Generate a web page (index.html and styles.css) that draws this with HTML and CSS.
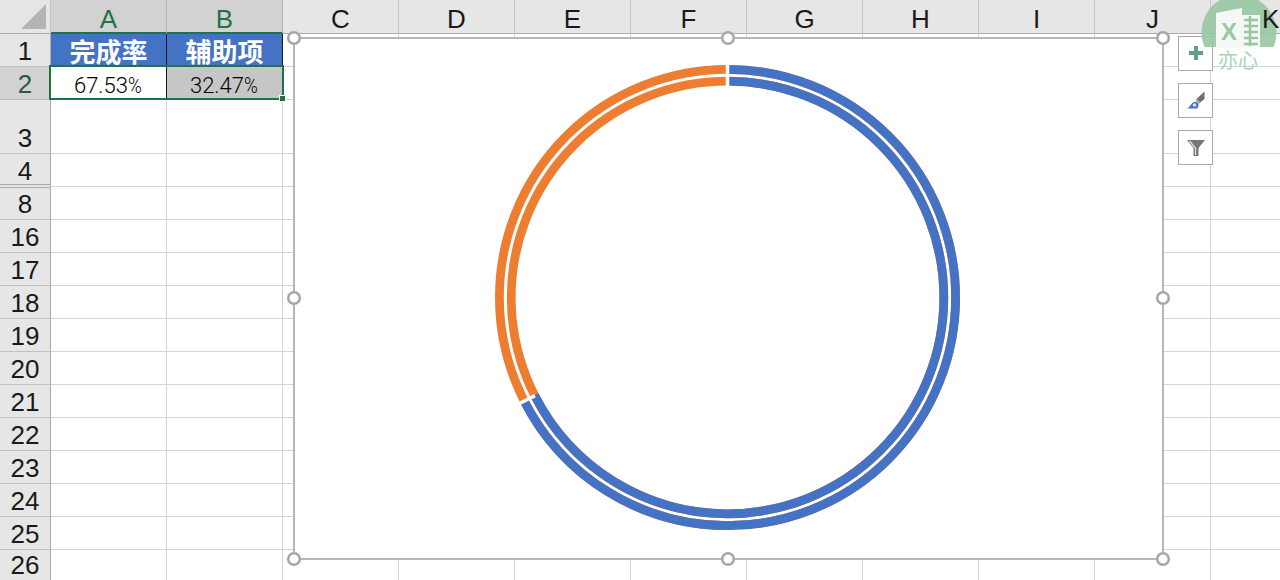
FILE: index.html
```html
<!DOCTYPE html>
<html lang="zh">
<head>
<meta charset="utf-8">
<title>完成率</title>
<link rel="stylesheet" href="styles.css">
</head>
<body>
<div class="sheet">
  <div class="row col-row">
    <div class="corner"><span class="tri"></span></div>
    <div class="col active">A</div><div class="col active">B</div>
    <div class="col">C</div><div class="col">D</div><div class="col">E</div><div class="col">F</div>
    <div class="col">G</div><div class="col">H</div><div class="col">I</div><div class="col">J</div>
    <div class="col last"><span class="k">K</span></div>
  </div>
  <div class="row"><div class="rh">1</div><div class="cell title">完成率</div><div class="cell title">辅助项</div><div class="fill"></div></div>
  <div class="row"><div class="rh cur">2</div><div class="cell val">67.53<span class="pct">%</span></div><div class="cell val sel">32.47<span class="pct">%</span></div><div class="fill"></div></div>
  <div class="row tall"><div class="rh">3</div><div class="cell"></div><div class="cell"></div><div class="fill"></div></div>
  <div class="row"><div class="rh gap">4</div><div class="cell"></div><div class="cell"></div><div class="fill"></div></div>
  <div class="row"><div class="rh after-gap">8</div><div class="cell"></div><div class="cell"></div><div class="fill"></div></div>
  <div class="row"><div class="rh">16</div><div class="cell"></div><div class="cell"></div><div class="fill"></div></div>
  <div class="row"><div class="rh">17</div><div class="cell"></div><div class="cell"></div><div class="fill"></div></div>
  <div class="row"><div class="rh">18</div><div class="cell"></div><div class="cell"></div><div class="fill"></div></div>
  <div class="row"><div class="rh">19</div><div class="cell"></div><div class="cell"></div><div class="fill"></div></div>
  <div class="row"><div class="rh">20</div><div class="cell"></div><div class="cell"></div><div class="fill"></div></div>
  <div class="row"><div class="rh">21</div><div class="cell"></div><div class="cell"></div><div class="fill"></div></div>
  <div class="row"><div class="rh">22</div><div class="cell"></div><div class="cell"></div><div class="fill"></div></div>
  <div class="row"><div class="rh">23</div><div class="cell"></div><div class="cell"></div><div class="fill"></div></div>
  <div class="row"><div class="rh">24</div><div class="cell"></div><div class="cell"></div><div class="fill"></div></div>
  <div class="row"><div class="rh">25</div><div class="cell"></div><div class="cell"></div><div class="fill"></div></div>
  <div class="row last-row"><div class="rh">26</div><div class="cell"></div><div class="cell"></div><div class="fill"></div></div>

  <div class="selection"><span class="handle"></span></div>

  <svg class="chart" width="900" height="550" viewBox="280 25 900 550">
    <rect x="294" y="38" width="869" height="521" fill="#fff" stroke="#a6a6a6" stroke-width="1.600"/>
    <g fill="none" stroke-width="8.800">
      <circle cx="727.500" cy="297.500" r="228.100" stroke="#ed7d31"/>
      <circle cx="727.500" cy="297.500" r="216.300" stroke="#ed7d31"/>
      <circle cx="727.500" cy="297.500" r="228.100" stroke="#4472c4" pathLength="100" stroke-dasharray="67.53 32.47" transform="rotate(-90 727.500 297.500)"/>
      <circle cx="727.500" cy="297.500" r="216.300" stroke="#4472c4" pathLength="100" stroke-dasharray="67.53 32.47" transform="rotate(-90 727.500 297.500)"/>
    </g>
    <path d="M727.500 55V100M519.900 403.300L535 395.600" stroke="#fff" stroke-width="3.500" fill="none"/>
    <g fill="#fff" stroke="#a6a6a6" stroke-width="2.500">
      <circle cx="294" cy="38" r="5.800"/><circle cx="728" cy="38" r="5.800"/><circle cx="1163" cy="38" r="5.800"/>
      <circle cx="294" cy="298" r="5.800"/><circle cx="1163" cy="298" r="5.800"/>
      <circle cx="294" cy="559" r="5.800"/><circle cx="728" cy="559" r="5.800"/><circle cx="1163" cy="559" r="5.800"/>
    </g>
  </svg>

  <div class="tools">
    <div class="tool"><svg class="plus" width="16" height="16" viewBox="0 0 16 16"><path d="M6 1h4v5h5v4h-5v5H6v-5H1V6h5z" fill="#5f9f85"/></svg></div>
    <div class="tool"><svg width="20" height="20" viewBox="0 0 20 20"><path d="M18.500.5v7.500l-4.500 3.500-3.500-3.500z" fill="#6f6f6f"/><path d="M9.500 9l1.500-1 3.500 3.500-1.500 1.500z" fill="#a6a6a6"/><path d="M8 11c2.500-1 5 1 4.500 3.500-.2 1.300-.7 2.300-1.500 3H1.500C3.500 16 4.500 14 5.500 13c.7-.9 1.500-1.600 2.500-2z" fill="#4472c4"/><circle cx="8.500" cy="14" r="1.800" fill="#fff" fill-opacity=".8"/></svg></div>
    <div class="tool"><svg width="20" height="18" viewBox="0 0 20 18"><path d="M1 1h18l-6.500 8v8h-5V9z" fill="#777"/><path d="M3.500 2l6 7v7" fill="none" stroke="#e4e4e4" stroke-width="1.200"/></svg></div>
  </div>

  <div class="mark">
    <svg width="78" height="48" viewBox="0 0 78 48">
      <path d="M4.500 47a37.500 37.500 0 1 1 69 0z" fill="#97c8a1" fill-opacity=".9"/>
      <path d="M16 13l26-5v40H16z" fill="#f5f9f6"/>
      <path d="M42 15h18v32H42z" fill="#f5f9f6"/>
      <path d="M44 20h14M44 26h14M44 32h14M44 38h14M44 44h14M50 16v30" stroke="#97c8a1" stroke-width="2.500" fill="none"/>
    </svg>
    <span class="mark-x">X</span>
    <span class="mark-name">亦心</span>
  </div>
</div>
</body>
</html>
```
FILE: styles.css
```css
html, body {
  margin: 0;
  padding: 0;
  background: #fff;
}
body {
  width: 1280px;
  height: 580px;
  overflow: hidden;
  font-family: "Liberation Sans", "Noto Sans CJK SC", sans-serif;
  color: #1a1a1a;
}
.sheet {
  position: relative;
  width: 1280px;
  height: 580px;
  overflow: hidden;
}
.row {
  display: flex;
  height: 33px;
}
.tall { height: 54px; }
.last-row { height: 31px; }
.col-row {
  height: 34px;
  background: #e6e6e6;
}
.corner {
  box-sizing: border-box;
  width: 51px;
  border-right: 1px solid #c6c6c6;
  border-bottom: 1px solid #ababab;
  display: flex;
  justify-content: flex-end;
  align-items: flex-end;
  padding: 0 4px 4px 0;
}
.tri {
  width: 0;
  height: 0;
  border-left: 25px solid transparent;
  border-bottom: 25px solid #b4b4b4;
}
.col {
  box-sizing: border-box;
  width: 116px;
  flex: none;
  border-right: 1px solid #c6c6c6;
  border-bottom: 1px solid #ababab;
  text-align: center;
  font-size: 26px;
  line-height: 39px;
  font-weight: 400;
}
.col.active {
  background: #d2d2d2;
  color: #217346;
  border-bottom: 2px solid #217346;
  border-right-color: #b4b4b4;
}
.col.last {
  flex: 1;
  width: auto;
  border-right: 0;
  text-align: left;
  padding-left: 51px;
}
.k {
  position: relative;
  z-index: 2;
}
.rh {
  box-sizing: border-box;
  width: 51px;
  flex: none;
  background: #e6e6e6;
  border-right: 1px solid #ababab;
  border-bottom: 1px solid #c0c0c0;
  font-size: 26px;
  line-height: 29px;
  display: flex;
  align-items: flex-end;
  justify-content: center;
}
.last-row .rh, .last-row .cell, .last-row .fill {
  border-bottom: 0;
}
.last-row .rh {
  padding-bottom: 1px;
}
.rh.cur {
  background: #d2d2d2;
  color: #2d5a43;
}
.rh.gap {
  border-bottom-color: #e6e6e6;
  background: linear-gradient(to top, #e6e6e6 1px, #ababab 1px, #ababab 2px, #e6e6e6 2px);
}
.rh.after-gap {
  border-top: 1px solid #ababab;
}
.cell {
  box-sizing: border-box;
  width: 116px;
  flex: none;
  border-right: 1px solid #d4d4d4;
  border-bottom: 1px solid #d4d4d4;
  text-align: center;
}
.title {
  background: #4472c4;
  border-right: 1px solid #1a1a1a;
  border-bottom: 0;
  color: #fff;
  font-weight: 700;
  font-size: 26px;
  line-height: 33px;
  font-family: "Noto Sans CJK SC", sans-serif;
}
.val {
  border-right: 1px solid #1a1a1a;
  font-family: Roboto, "Liberation Sans", sans-serif;
  font-weight: 300;
  font-size: 22px;
  line-height: 37px;
  border-bottom: 0;
  color: #000;
}
.sel { background: #c6c6c6; }
.pct {
  display: inline-block;
  width: 15px;
  font-size: 22px;
  transform: scaleX(.85);
  transform-origin: left center;
}
.fill {
  flex: 1;
  box-sizing: border-box;
  border-bottom: 1px solid #d4d4d4;
  background: repeating-linear-gradient(to right, transparent 0, transparent 115px, #d4d4d4 115px, #d4d4d4 116px);
}
.selection {
  position: absolute;
  left: 49px;
  top: 65px;
  width: 231px;
  height: 31px;
  border: 2px solid #217346;
}
.handle {
  position: absolute;
  right: -4px;
  bottom: -4px;
  width: 5px;
  height: 5px;
  background: #217346;
  border: 1px solid #fff;
}
.chart {
  position: absolute;
  left: 280px;
  top: 25px;
}
.tools {
  position: absolute;
  left: 1178px;
  top: 36px;
  display: flex;
  flex-direction: column;
  gap: 12px;
}
.tool {
  box-sizing: border-box;
  width: 35px;
  height: 35px;
  border: 1px solid #a9a9a9;
  background: #fff;
  display: flex;
  align-items: center;
  justify-content: center;
}
.plus { margin-bottom: 2px; }
.mark {
  position: absolute;
  left: 1200px;
  top: 0;
  width: 78px;
  height: 72px;
}
.mark svg { display: block; }
.mark-x {
  position: absolute;
  left: 21px;
  top: 18px;
  font-size: 24px;
  font-weight: 700;
  color: #97c8a1;
}
.mark-name {
  position: absolute;
  left: 18px;
  top: 48px;
  font-size: 20px;
  line-height: 24px;
  color: #a9d4b3;
  font-family: "Noto Sans CJK SC", sans-serif;
}
```
